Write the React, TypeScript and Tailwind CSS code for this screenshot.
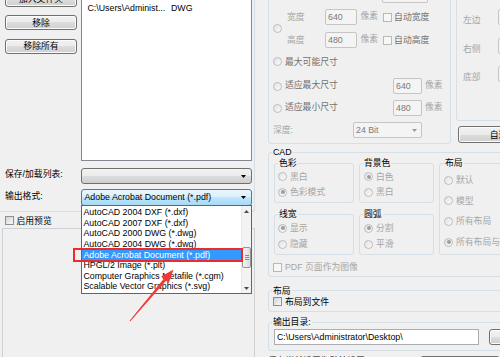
import type { ReactNode } from "react";

const FORMATS = [
  "AutoCAD 2004 DXF (*.dxf)",
  "AutoCAD 2007 DXF (*.dxf)",
  "AutoCAD 2000 DWG (*.dwg)",
  "AutoCAD 2004 DWG (*.dwg)",
  "Adobe Acrobat Document (*.pdf)",
  "HPGL/2 Image (*.plt)",
  "Computer Graphics Metafile (*.cgm)",
  "Scalable Vector Graphics (*.svg)",
];

export default function App() {
  return (
    <div className="relative flex h-[357px] w-[500px] overflow-hidden bg-[#f0f0f0] font-['Liberation_Sans','Noto_Sans_CJK_SC',sans-serif] text-[8.8px] leading-[10px] text-black">
      <LeftPane />
      <RightPane />

      <FormatDropdown />

      {/* annotation: red frame + arrow */}
      <div className="absolute left-[73px] top-[248px] h-[14px] w-[170px] border-2 border-[#ee2b2b]" />
      <svg
        className="pointer-events-none absolute left-0 top-0"
        width="500"
        height="357"
      >
        <polygon
          points="129.6,320.7 163.75,278.73 161.1,276.5 173.5,269.5 168.8,282.9 166.05,280.67 130.4,321.3"
          fill="#f0393a"
        />
      </svg>
    </div>
  );
}

function LeftPane() {
  return (
    <div className="flex w-[255px] shrink-0 flex-col">
      <div className="-mt-[10px] rounded-br-[3px] border-b border-r border-[#d5dfe5] pb-[5.5px] pl-[5px] pr-[2px]">
        <div className="flex h-[171px] gap-[4px]">
          <div className="flex w-[72px] flex-col gap-[8.5px] pt-[1.5px]">
            <WinButton className="h-[15px]">加入文件夹</WinButton>
            <WinButton className="h-[15px]">移除</WinButton>
            <WinButton className="h-[15px]">移除所有</WinButton>
          </div>
          <div className="w-[171px] border border-[#828790] bg-white pl-[5.5px] pt-[12.3px]">
            <div className="flex">
              <span className="w-[83.5px]">C:\Users\Administ...</span>
              <span>DWG</span>
            </div>
          </div>
        </div>

        <div className="mt-[7px] flex h-[16px] items-center">
          <span className="w-[76px] -translate-y-[2px]">保存/加载列表:</span>
          <Combo text="" />
        </div>
        <div className="mt-[5px] flex h-[16.5px] items-center">
          <span className="w-[76px] -translate-y-[1px]">输出格式:</span>
          <Combo text="Adobe Acrobat Document (*.pdf)" focused />
        </div>
      </div>

      <div className="mt-[3px] flex h-[11px] items-center pl-[5px]">
        <Check />
        <span className="ml-[2.5px]">启用预览</span>
      </div>

      <div className="ml-[2px] mt-[2px] w-[253px] flex-1 border-l border-r border-t border-[#ccd2d6]" />
    </div>
  );
}

function RightPane() {
  return (
    <div className="flex w-[245px] shrink-0 flex-col pl-[13px]">
      <div className="-mt-[20px] flex h-[164px] shrink-0 gap-[5px]">
        <SizeGroup />
        <div className="flex w-[95px] shrink-0 flex-col">
          <div className="flex h-[141px] w-[60px] flex-col rounded-b-[3px] border border-[#d5dfe5] pl-[6px]">
            <MarginRow className="mt-[28px]" label="左边" />
            <MarginRow className="mt-[13px]" label="右侧" />
            <MarginRow className="mt-[12px]" label="底部" />
          </div>
          <WinButton className="ml-[2px] mt-[5px] h-[17px] w-[90px]">自适应</WinButton>
        </div>
      </div>

      <fieldset className="mt-[3px] w-[260px] shrink-0 rounded-[3px] border border-[#d5dfe5]">
        <legend className="ml-[3px] px-[1px] leading-[10px]">CAD</legend>
        <div className="pb-[3px] pl-[5px] pt-[1px]">
          <div className="grid grid-cols-[80px_75px_80px] gap-x-[5px] gap-y-[6px]">
            <SubGroup title="色彩" rowClass="h-[15.5px]" padClass="pt-[1px] pb-[2px] pl-[3px]">
              <Opt label="黑白" />
              <Opt label="色彩模式" checked />
            </SubGroup>
            <SubGroup title="背景色" rowClass="h-[15.5px]" padClass="pt-[1px] pb-[2px] pl-[4px]">
              <Opt label="白色" checked />
              <Opt label="黑白" />
            </SubGroup>
            <fieldset className="row-span-2 rounded-[3px] border border-[#d5dfe5]">
              <legend className="ml-[4px] px-[1px] leading-[10px]">布局</legend>
              <div className="flex flex-col pl-[4px] pt-[1.7px]">
                <div className="flex h-[20.7px] items-center"><Opt label="默认" /></div>
                <div className="flex h-[20.7px] items-center"><Opt label="模型" /></div>
                <div className="flex h-[20.7px] items-center"><Opt label="所有布局" /></div>
                <div className="flex h-[20.7px] items-center"><Opt label="所有布局与模型" checked /></div>
              </div>
            </fieldset>
            <SubGroup title="线宽" rowClass="h-[15.7px]" padClass="pt-[1.5px] pb-[2.5px] pl-[3px]">
              <Opt label="显示" checked />
              <Opt label="隐藏" />
            </SubGroup>
            <SubGroup title="圆弧" rowClass="h-[15.7px]" padClass="pt-[1.5px] pb-[2.5px] pl-[4px]">
              <Opt label="分割" checked />
              <Opt label="平滑" />
            </SubGroup>
          </div>
          <div className="-ml-[1px] mt-[6px] flex h-[12px] items-center">
            <Check disabled />
            <span className="ml-[3px] text-[#a6a6a6]">PDF 页面作为图像</span>
          </div>
        </div>
      </fieldset>

      <fieldset className="mt-[8.5px] w-[260px] shrink-0 rounded-[3px] border border-[#d5dfe5]">
        <legend className="ml-[3px] px-[1px] leading-[10px]">布局</legend>
        <div className="flex h-[12px] items-center pl-[4px]">
          <Check />
          <span className="ml-[3px]">布局到文件</span>
        </div>
        <div className="h-[3.5px]" />
      </fieldset>

      <fieldset className="mt-[5px] w-[260px] shrink-0 rounded-[3px] border border-[#d5dfe5]">
        <legend className="ml-[3px] px-[1px] leading-[10px]">输出目录:</legend>
        <div className="flex pb-[5px] pl-[5px] pt-[1.5px]">
          <div className="flex h-[16px] w-[205px] items-center border border-[#abadb3] bg-white pl-[2px]">
            C:\Users\Administrator\Desktop\
          </div>
          <WinButton className="ml-[10px] h-[16px] w-[60px]">...</WinButton>
        </div>
      </fieldset>

      <div className="mt-[5px] flex shrink-0">
        <span className="w-[179px]">保存当前设置为默认设置</span>
        <WinButton className="h-[20px] w-[80px]">确定</WinButton>
      </div>
    </div>
  );
}

function SizeGroup() {
  return (
    <div className="flex h-[164px] w-[183px] shrink-0 flex-col rounded-b-[3px] border border-[#d5dfe5] pl-[4px]">
      <div className="flex h-[21.5px] items-end pl-[109px]">
        <Field className="w-[46px]" value="" />
      </div>

      <div className="mt-[6.5px] flex items-center">
        <Radio />
        <div className="ml-[5px] flex flex-col gap-[7px]">
          <SizeRow label="宽度" value="640" check="自动宽度" />
          <SizeRow label="高度" value="480" check="自动高度" />
        </div>
      </div>

      <div className="mt-[5.5px] flex h-[16px] items-center">
        <Radio />
        <span className="ml-[3px] text-[#707070]">最大可能尺寸</span>
      </div>

      <div className="mt-[8.5px] flex h-[16px] items-center">
        <Radio />
        <span className="ml-[3px] w-[108px] -translate-y-[1px] text-[#707070]">适应最大尺寸</span>
        <Field className="w-[29px]" value="640" />
        <span className="ml-[3px] -translate-y-[1.5px] text-[#a6a6a6]">像素</span>
      </div>

      <div className="mt-[6px] flex h-[16px] items-center">
        <Radio />
        <span className="ml-[3px] w-[108px] -translate-y-[1px] text-[#707070]">适应最小尺寸</span>
        <Field className="w-[29px]" value="480" />
        <span className="ml-[3px] -translate-y-[1.5px] text-[#a6a6a6]">像素</span>
      </div>

      <div className="mt-[6px] flex h-[16px] items-center">
        <span className="w-[80px] text-[#a6a6a6]">深度:</span>
        <div className="flex h-[16px] w-[69px] items-center justify-between rounded-[2px] border border-[#c5c5c5] bg-[#f4f4f4] pl-[2px] pr-[4px] text-[#7a7a7a]">
          24 Bit
          <Tri color="#9a9a9a" />
        </div>
      </div>
    </div>
  );
}

function SizeRow({ label, value, check }: { label: string; value: string; check: string }) {
  return (
    <div className="flex h-[16px] items-center">
      <span className="w-[38px] text-[#a6a6a6]">{label}</span>
      <Field className="w-[32px]" value={value} />
      <span className="ml-[3.5px] -translate-y-[1.5px] text-[#a6a6a6]">像素</span>
      <span className="ml-[5px]">
        <Check disabled />
      </span>
      <span className="ml-[2px] text-[#707070]">{check}</span>
    </div>
  );
}

function MarginRow({ label, className }: { label: string; className: string }) {
  return (
    <div className={`flex h-[16px] items-end ${className}`}>
      <span className="w-[35px] shrink-0 text-[#a6a6a6]">{label}</span>
      <Field className="w-[40px] shrink-0" value="0" />
    </div>
  );
}

function SubGroup({
  title,
  children,
  rowClass,
  padClass,
}: {
  title: string;
  children: ReactNode[];
  rowClass: string;
  padClass: string;
}) {
  return (
    <fieldset className="rounded-[3px] border border-[#d5dfe5]">
      <legend className="ml-[3px] px-[1px] leading-[10px]">{title}</legend>
      <div className={`flex flex-col ${padClass}`}>
        {children.map((c, i) => (
          <div key={i} className={`flex items-center ${rowClass}`}>
            {c}
          </div>
        ))}
      </div>
    </fieldset>
  );
}

function Opt({ label, checked = false }: { label: string; checked?: boolean }) {
  return (
    <div className="flex items-center whitespace-nowrap">
      <Radio checked={checked} />
      <span className="ml-[3px] text-[#a6a6a6]">{label}</span>
    </div>
  );
}

function FormatDropdown() {
  return (
    <div className="absolute left-[81px] top-[205px] flex h-[89px] w-[171px] border border-[#646464] bg-white">
      <div className="flex-1 pt-[1px]">
        {FORMATS.map((f, i) => (
          <div
            key={f}
            className={`h-[10.63px] whitespace-nowrap pl-[1.5px] leading-[10.63px] ${
              i === 4 ? "bg-[#3399ff] text-white" : ""
            }`}
          >
            {f}
          </div>
        ))}
      </div>
      <div className="flex w-[10px] flex-col border-l border-[#e8e8e8] bg-[#f3f3f3]">
        <div className="flex h-[10px] items-center justify-center">
          <svg width="5" height="3" viewBox="0 0 5 3">
            <path d="M2.5 0L5 3H0z" fill="#4d4d4d" />
          </svg>
        </div>
        <div className="h-[31px]" />
        <div className="flex h-[21px] flex-col items-center justify-center gap-[1px] rounded-[2px] border border-[#979797] bg-[linear-gradient(to_right,#f6f6f6,#dadada)]">
          <span className="h-px w-[4px] bg-[#8a8a8a]" />
          <span className="h-px w-[4px] bg-[#8a8a8a]" />
          <span className="h-px w-[4px] bg-[#8a8a8a]" />
        </div>
        <div className="flex-1" />
        <div className="flex h-[10px] items-center justify-center">
          <Tri color="#4d4d4d" />
        </div>
      </div>
    </div>
  );
}

function WinButton({ children, className = "" }: { children: ReactNode; className?: string }) {
  return (
    <div
      className={`flex shrink-0 items-center justify-center rounded-[3px] border border-[#707070] bg-[linear-gradient(#f2f2f2_0%,#ebebeb_50%,#dddddd_50%,#cfcfcf_100%)] shadow-[inset_0_0_0_1px_#fbfbfb] ${className}`}
    >
      {children}
    </div>
  );
}

function Combo({ text, focused = false }: { text: string; focused?: boolean }) {
  return (
    <div
      className={`flex h-full w-[171px] items-center justify-between rounded-[3px] border pl-[2.5px] pr-[5px] ${
        focused
          ? "border-[#3c7fb1] bg-[linear-gradient(#eaf6fd_0%,#d9f0fc_50%,#bee6fd_50%,#a7d9f5_100%)]"
          : "border-[#707070] bg-[linear-gradient(#f2f2f2_0%,#ebebeb_50%,#dddddd_50%,#cfcfcf_100%)]"
      }`}
    >
      <span>{text}</span>
      <Tri color="#000000" />
    </div>
  );
}

function Field({ value, className = "" }: { value: string; className?: string }) {
  return (
    <div
      className={`flex h-[16px] shrink-0 items-center rounded-[2px] border border-[#c5c5c5] bg-[#f4f4f4] px-[2px] text-[#7a7a7a] ${className}`}
    >
      {value}
    </div>
  );
}

function Radio({ checked = false }: { checked?: boolean }) {
  return (
    <span className="flex h-[9px] w-[9px] shrink-0 items-center justify-center rounded-full border border-[#bdbdbd] bg-[linear-gradient(135deg,#e2e2e2,#fbfbfb)]">
      {checked && <span className="h-[4px] w-[4px] rounded-full bg-[#9d9d9d]" />}
    </span>
  );
}

function Check({ disabled = false }: { disabled?: boolean }) {
  return (
    <span
      className={`block h-[9px] w-[9px] shrink-0 border ${
        disabled
          ? "border-[#b8b8b8] bg-[#f7f7f7]"
          : "border-[#8e8f8f] bg-[linear-gradient(135deg,#d0d3d8,#f9f9f9)]"
      }`}
    />
  );
}

function Tri({ color }: { color: string }) {
  return (
    <svg width="5" height="3" viewBox="0 0 5 3" className="shrink-0">
      <path d="M0 0h5L2.5 3z" fill={color} />
    </svg>
  );
}
